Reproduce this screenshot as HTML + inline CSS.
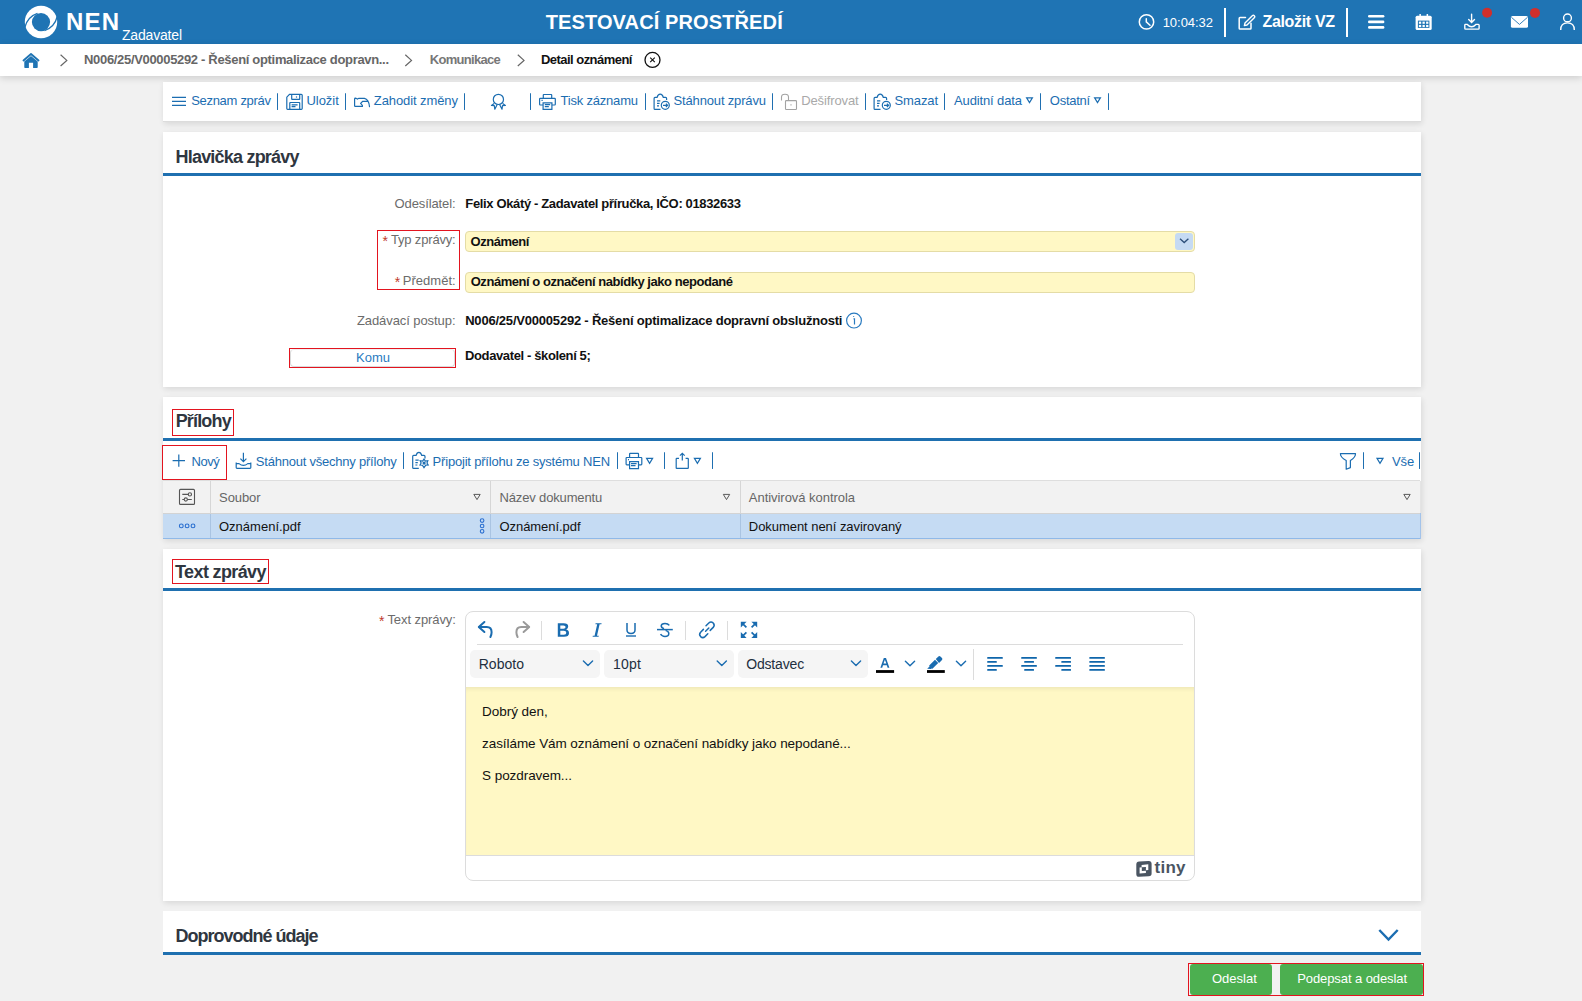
<!DOCTYPE html>
<html lang="cs"><head><meta charset="utf-8"><title>Detail oznámení</title>
<style>
html,body{margin:0;padding:0;}
body{width:1582px;height:1001px;overflow:hidden;position:relative;background:#f1f1f1;font-family:"Liberation Sans", sans-serif;}
.t{position:absolute;white-space:nowrap;line-height:1;}
.a{position:absolute;}
.hdr{left:0;top:0;width:1582px;height:44px;background:#1f74b4;}
.bc{left:0;top:44px;width:1582px;height:32px;background:#fff;box-shadow:0 2px 7px rgba(0,0,0,.15);}
.card{background:#fff;box-shadow:1px 2px 6px rgba(0,0,0,.11);left:163px;width:1258px;}
.bl{height:3px;background:#1f70b0;left:163px;width:1258px;}
.div{width:1px;height:17px;background:#1f6fb1;border-radius:0.5px;}
.rb{border:1px solid #e3141f;box-sizing:border-box;}
.inp{background:#fff8c5;border:1px solid #e4dca6;border-radius:4px;box-sizing:border-box;}
svg{position:absolute;overflow:visible;}

</style></head><body>
<div class="a hdr"></div>
<div class="a bc"></div>
<!-- cards -->
<div class="a card" style="top:82px;height:39px;border-bottom:1px solid #dcdcdc;"></div>
<div class="a card" style="top:132px;height:255px;"></div>
<div class="a bl" style="top:173px;"></div>
<div class="a card" style="top:397px;height:142px;"></div>
<div class="a bl" style="top:438px;"></div>
<div class="a card" style="top:549px;height:352px;"></div>
<div class="a bl" style="top:588px;"></div>
<div class="a card" style="top:911px;height:44px;box-shadow:none;"></div>
<div class="a bl" style="top:952px;"></div>
<!-- toolbar dividers -->
<div class="a div" style="left:277px;top:93px;"></div>
<div class="a div" style="left:345px;top:93px;"></div>
<div class="a div" style="left:464px;top:93px;"></div>
<div class="a div" style="left:530px;top:93px;"></div>
<div class="a div" style="left:645px;top:93px;"></div>
<div class="a div" style="left:772px;top:93px;"></div>
<div class="a div" style="left:865px;top:93px;"></div>
<div class="a div" style="left:944px;top:93px;"></div>
<div class="a div" style="left:1040px;top:93px;"></div>
<div class="a div" style="left:1108px;top:93px;"></div>
<!-- form -->
<div class="a rb" style="left:377px;top:230px;width:83px;height:60px;"></div>
<div class="a inp" style="left:465px;top:231px;width:730px;height:21px;"></div>
<div class="a" style="left:1175px;top:233px;width:18px;height:17px;background:#c5daf3;border-radius:3px;"></div>
<div class="a inp" style="left:465px;top:272px;width:730px;height:21px;"></div>
<div class="a" style="left:290px;top:349px;width:165px;height:18px;border-radius:4px;border:1px solid #dadada;border-top-color:#f0f0f0;box-sizing:border-box;background:#fff;"></div>
<div class="a rb" style="left:289px;top:348px;width:167px;height:20px;"></div>
<!-- prilohy toolbar -->
<div class="a rb" style="left:162px;top:445px;width:65px;height:35px;"></div>
<div class="a div" style="left:403px;top:452px;"></div>
<div class="a div" style="left:617px;top:452px;"></div>
<div class="a div" style="left:664px;top:452px;"></div>
<div class="a div" style="left:712px;top:452px;"></div>
<div class="a div" style="left:1363px;top:452px;"></div>
<div class="a div" style="left:1419px;top:452px;"></div>
<!-- table -->
<div class="a" style="left:163px;top:480px;width:1257px;height:33px;background:#f2f2f2;border-top:1px solid #dedede;box-sizing:border-box;"></div>
<div class="a" style="left:163px;top:513px;width:1257px;height:26px;background:#c5dbf3;border-bottom:1px solid #90b9e8;box-sizing:border-box;"></div>
<div class="a" style="left:163px;top:513px;width:1257px;height:1px;background:#d3d3d3;"></div>
<div class="a" style="left:210px;top:481px;width:1px;height:32px;background:#d6d6d6;"></div>
<div class="a" style="left:490px;top:481px;width:1px;height:32px;background:#d6d6d6;"></div>
<div class="a" style="left:740px;top:481px;width:1px;height:32px;background:#d6d6d6;"></div>
<div class="a" style="left:210px;top:514px;width:1px;height:24px;background:#aac4e2;"></div>
<div class="a" style="left:490px;top:514px;width:1px;height:24px;background:#aac4e2;"></div>
<div class="a" style="left:740px;top:514px;width:1px;height:24px;background:#aac4e2;"></div>
<div class="a" style="left:1420px;top:481px;width:1px;height:32px;background:#e4e4e4;"></div>
<div class="a" style="left:1420px;top:513px;width:1px;height:26px;background:#a3c3ea;"></div>
<div class="a rb" style="left:172px;top:559px;width:97px;height:25px;"></div>
<div class="a rb" style="left:172px;top:409px;width:62px;height:27px;"></div>
<!-- editor -->
<div class="a" style="left:465px;top:611px;width:730px;height:270px;border:1px solid #dcdcdc;border-radius:8px;box-sizing:border-box;background:#fff;overflow:hidden;">
  <div class="a" style="left:11px;top:32px;width:706px;height:1px;background:#dcdcdc;"></div>
  <div class="a" style="left:4px;top:38px;width:130px;height:28px;background:#f5f5f5;border-radius:5px;"></div>
  <div class="a" style="left:138px;top:38px;width:130px;height:28px;background:#f5f5f5;border-radius:5px;"></div>
  <div class="a" style="left:272px;top:38px;width:130px;height:28px;background:#f5f5f5;border-radius:5px;"></div>
  <div class="a" style="left:507px;top:37px;width:1px;height:31px;background:#dcdcdc;"></div>
  <div class="a" style="left:75px;top:9px;width:1px;height:19px;background:#dcdcdc;"></div>
  <div class="a" style="left:219px;top:9px;width:1px;height:19px;background:#dcdcdc;"></div>
  <div class="a" style="left:261px;top:9px;width:1px;height:19px;background:#dcdcdc;"></div>
  <div class="a" style="left:0;top:75px;width:728px;height:168px;background:#fff8c5;border-bottom:1px solid #dcdcdc;box-shadow:inset 0 4px 4px -2px rgba(0,0,0,.07);"></div>
</div>
<!-- buttons -->
<div class="a rb" style="left:1188px;top:963px;width:236px;height:33px;"></div>
<div class="a" style="left:1190px;top:964px;width:82px;height:31px;background:#4caf50;border-radius:3px;"></div>
<div class="a" style="left:1280px;top:964px;width:143px;height:31px;background:#4caf50;border-radius:3px;"></div>
<!-- header icons -->
<svg style="left:0;top:0" width="1582" height="44" viewBox="0 0 1582 44">
  <circle cx="41" cy="22" r="16.2" fill="#fff"/>
  <circle cx="41" cy="22.1" r="9.1" fill="#1f74b4"/>
  <path d="M24.6 27.8 Q27.5 16.5 37.5 13.3" stroke="#1f74b4" stroke-width="1.4" fill="none"/>
  <path d="M57.4 16.2 Q54.5 27.5 44.5 30.7" stroke="#1f74b4" stroke-width="1.4" fill="none"/>
  <!-- clock -->
  <circle cx="1146.5" cy="21.9" r="7.2" stroke="#fff" stroke-width="1.5" fill="none"/>
  <path d="M1146.3 18.8 V21.9 L1150 25.2" stroke="#fff" stroke-width="1.5" fill="none" stroke-linecap="round"/>
  <!-- dividers -->
  <rect x="1224" y="8" width="2" height="29" fill="#fff"/>
  <rect x="1346" y="8" width="2" height="29" fill="#fff"/>
  <!-- edit -->
  <path d="M1245.5 17.6 H1240 Q1239.2 17.6 1239.2 18.4 V28.2 Q1239.2 29 1240 29 H1250.2 Q1251 29 1251 28.2 V23.2" stroke="#fff" stroke-width="1.5" fill="none" stroke-linecap="round"/>
  <path d="M1245 23 L1252.3 15.7 Q1253.3 14.7 1254.3 15.7 Q1255.3 16.7 1254.3 17.7 L1247 25 L1244.4 25.6 Z" stroke="#fff" stroke-width="1.4" fill="none" stroke-linejoin="round"/>
  <!-- hamburger -->
  <rect x="1368" y="15" width="16.4" height="2.6" rx="1.3" fill="#fff"/>
  <rect x="1368" y="20.6" width="16.4" height="2.6" rx="1.3" fill="#fff"/>
  <rect x="1368" y="26.1" width="16.4" height="2.6" rx="1.3" fill="#fff"/>
  <!-- calendar -->
  <rect x="1415.6" y="15.8" width="16.1" height="14.2" rx="1.5" fill="#fff"/>
  <rect x="1417.9" y="20.6" width="11.5" height="7.3" fill="#1f74b4"/>
  <rect x="1418.9" y="21.6" width="2.3" height="2.2" fill="#fff"/><rect x="1422.5" y="21.6" width="2.3" height="2.2" fill="#fff"/><rect x="1426.1" y="21.6" width="2.3" height="2.2" fill="#fff"/>
  <rect x="1418.9" y="24.9" width="2.3" height="2.2" fill="#fff"/><rect x="1422.5" y="24.9" width="2.3" height="2.2" fill="#fff"/><rect x="1426.1" y="24.9" width="2.3" height="2.2" fill="#fff"/>
  <rect x="1419.4" y="14" width="1.5" height="3.4" fill="#fff"/><rect x="1426.6" y="14" width="1.5" height="3.4" fill="#fff"/>
  <!-- download tray -->
  <path d="M1471.6 14.3 V22.4 M1468.7 19.5 L1471.6 22.4 L1474.5 19.5" stroke="#fff" stroke-width="1.4" fill="none" stroke-linecap="round"/>
  <path d="M1465 24.4 H1467.3 Q1471.6 29 1475.9 24.4 H1478.3 Q1479.1 24.4 1479.1 25.2 V28.2 Q1479.1 29.1 1478.3 29.1 H1465.6 Q1464.8 29.1 1464.8 28.2 V25.2 Q1464.8 24.4 1465 24.4 Z" stroke="#fff" stroke-width="1.4" fill="none"/>
  <circle cx="1487.1" cy="12.8" r="5" fill="#d02f2c"/>
  <!-- mail -->
  <rect x="1510.9" y="16" width="17.1" height="11.8" rx="1.6" fill="#fff"/>
  <path d="M1511.4 17.3 L1519.45 24.4 L1527.5 17.3" stroke="#1f74b4" stroke-width="0.9" fill="none"/>
  <circle cx="1535" cy="12.9" r="5" fill="#d02f2c"/>
  <!-- user -->
  <circle cx="1567.5" cy="17.9" r="3.9" stroke="#fff" stroke-width="1.4" fill="none"/>
  <path d="M1560.7 29.9 Q1560.7 22.9 1567.5 22.9 Q1574.3 22.9 1574.3 29.9" stroke="#fff" stroke-width="1.4" fill="none"/>
</svg>
<!-- breadcrumb icons -->
<svg style="left:0;top:44px" width="700" height="32" viewBox="0 44 700 32">
  <path d="M23.5 60.5 L31 54 L38.5 60.5" stroke="#1f74b4" stroke-width="1.9" fill="none" stroke-linecap="round" stroke-linejoin="round"/>
  <path d="M24.3 61.6 L31 56 L37.7 61.6 V67.3 Q37.7 68 37 68 H33.1 V62.8 H28.9 V68 H25 Q24.3 68 24.3 67.3 Z" fill="#1f74b4"/>
  <path d="M60.6 54.8 L66.8 60.4 L60.6 66" stroke="#666" stroke-width="1.2" fill="none"/>
  <path d="M405.3 54.8 L411.5 60.4 L405.3 66" stroke="#666" stroke-width="1.2" fill="none"/>
  <path d="M517.8 54.8 L524 60.4 L517.8 66" stroke="#666" stroke-width="1.2" fill="none"/>
  <circle cx="652.5" cy="59.9" r="7.5" stroke="#111" stroke-width="1.3" fill="none"/>
  <path d="M650.2 57.6 L654.8 62.2 M654.8 57.6 L650.2 62.2" stroke="#111" stroke-width="1.1" fill="none"/>
</svg>
<!-- toolbar icons -->
<svg style="left:0;top:82px" width="1200" height="40" viewBox="0 82 1200 40">
  <g stroke="#1b6db1" fill="none" stroke-width="1.2">
    <path d="M172 97.3 H186 M172 101.3 H186 M172 105.3 H186"/>
    <!-- save -->
    <path d="M289.5 94.3 H301.3 Q302.2 94.3 302.2 95.2 V108.6 Q302.2 109.4 301.3 109.4 H287.6 Q286.8 109.4 286.8 108.6 V97.2 Z"/>
    <path d="M291.7 94.3 V99 Q291.7 99.4 292.1 99.4 H299.3 Q299.7 99.4 299.7 99 V94.3"/>
    <path d="M289.8 109.4 V103 Q289.8 102.5 290.3 102.5 H299.2 Q299.7 102.5 299.7 103 V109.4"/>
    <path d="M291.6 104.8 H297.6 M291.6 106.7 H295.5"/>
    <path d="M296.5 96.4 V97.6"/>
    <!-- zahodit -->
    <path d="M369.5 106.6 Q368.8 99.4 364.4 98.4 H358.6 Q357.4 99.6 356.2 98.4 L355.4 98.2 Q354.6 98.2 354.6 99 V105.8 Q354.6 106.4 355.2 106.4 H362.4 V105.4 L360.6 103.4 L362.8 101.3 H367.2" stroke-linejoin="round" stroke-linecap="round"/>
    <!-- award -->
    <circle cx="498.4" cy="99.4" r="5.1"/>
    <path d="M494.2 103.4 L491.4 105.4 L494.3 105.6 L494.8 109.2 L497.2 104.5" stroke-linejoin="round"/>
    <path d="M502.6 103.4 L505.4 105.4 L502.5 105.6 L502 109.2 L499.6 104.5" stroke-linejoin="round"/>
    <!-- printer -->
    <path d="M543.3 98.2 V95 Q543.3 94.5 543.8 94.5 H551.2 Q551.7 94.5 551.7 95 V98.2"/>
    <path d="M543 105 H540.3 Q539.6 105 539.6 104.3 V99 Q539.6 98.4 540.3 98.4 H554.6 Q555.3 98.4 555.3 99 V104.3 Q555.3 105 554.6 105 H552"/>
    <path d="M543.1 109.4 V102.8 H551.9 V109.4 Z"/>
    <path d="M544.8 104.6 H550.2 M544.8 106.6 H548.8 M541.5 100.4 H542.7"/>
    <!-- clipboard arrow -->
    <path d="M666.6 100 V98.4 Q666.6 97.4 665.6 97.4 H663.3 Q662.5 94.2 660.2 94.2 Q657.9 94.2 657.1 97.4 H655 Q654.1 97.4 654.1 98.4 V108.4 Q654.1 109.3 655 109.3 H660.5"/>
    <path d="M657 100.9 H660.3 M657 103.4 H659.6 M657 105.9 H659"/>
    <circle cx="665.3" cy="105.3" r="4"/>
    <path d="M663 105.3 H667.6 M665.9 103.6 L667.6 105.3 L665.9 107"/>
    <path d="M887.6 100 V98.4 Q887.6 97.4 886.6 97.4 H884.3 Q883.5 94.2 881.2 94.2 Q878.9 94.2 878.1 97.4 H876 Q875.1 97.4 875.1 98.4 V108.4 Q875.1 109.3 876 109.3 H881.5" transform="translate(-1 0)"/>
    <path d="M877 100.9 H880.3 M877 103.4 H879.6 M877 105.9 H879"/>
    <circle cx="886.3" cy="105.3" r="4"/>
    <path d="M884 105.3 H888.6 M886.9 103.6 L888.6 105.3 L886.9 107"/>
    <!-- triangles -->
    <path d="M1026.6 97.8 H1032.4 L1029.5 102.6 Z"/>
    <path d="M1094.6 97.8 H1100.4 L1097.5 102.6 Z"/>
  </g>
  <g stroke="#a3a3a3" fill="none" stroke-width="1.1">
    <path d="M781.5 100.6 V97.2 Q781.5 94.3 785 94.3 Q788.5 94.3 788.5 97.2 V100.4"/>
    <rect x="785.5" y="100.6" width="11" height="8.9" rx="0.8"/>
    <path d="M791 104.2 V105.4"/>
  </g>
</svg>
<!-- info icon -->
<svg style="left:840px;top:306px" width="30" height="30" viewBox="840 306 30 30">
  <circle cx="854" cy="320.6" r="7.4" stroke="#2a7bc0" stroke-width="1.2" fill="none"/>
  <path d="M853.5 318.8 H854.5 V324.5 M853.6 316.3 V317" stroke="#2a7bc0" stroke-width="1.2" fill="none"/>
</svg>
<!-- select chevron -->
<svg style="left:1170px;top:230px" width="30" height="22" viewBox="1170 230 30 22">
  <path d="M1180 238.8 L1184.2 242.6 L1188.4 238.8" stroke="#2d4f7a" stroke-width="1.3" fill="none"/>
</svg>
<!-- prilohy toolbar icons -->
<svg style="left:160px;top:442px" width="1270" height="100" viewBox="160 442 1270 100">
  <g stroke="#1b6db1" fill="none" stroke-width="1.2">
    <path d="M178.8 454.6 V466.7 M172.6 460.6 H185"/>
    <!-- download tray -->
    <path d="M243.4 452.8 V461.6 M240.4 458.6 L243.4 461.6 L246.4 458.6"/>
    <path d="M236.2 462.4 V467.6 Q236.2 468.4 237 468.4 H250 Q250.8 468.4 250.8 467.6 V462.4 M236.4 463.6 H239 Q243.4 467 247.8 463.6 H250.6"/>
    <!-- clipboard gear -->
    <path d="M425 458.4 V456.4 Q425 455.4 424 455.4 H421.7 Q420.9 452.4 418.9 452.4 Q416.9 452.4 416.1 455.4 H413.6 Q412.7 455.4 412.7 456.4 V467.4 Q412.7 468.4 413.6 468.4 H418.8"/>
    <path d="M415.4 460.1 H418.7 M415.4 462.6 H417.8 M415.4 465 H417.4"/>
    <path d="M424 459.1 L425.4 461 L427.8 460.7 L427 463 L428.2 465 L425.8 465.2 L424 467.6 L422.4 465.2 L420 465 L421.1 463 L420.2 460.7 L422.6 461 Z"/>
    <circle cx="424.1" cy="463.1" r="1" fill="#1b6db1"/>
    <!-- printer -->
    <path d="M629.6 457.3 V453.9 Q629.6 453.4 630.1 453.4 H638 Q638.5 453.4 638.5 453.9 V457.3"/>
    <path d="M629.4 464.8 H626.8 Q626.1 464.8 626.1 464.1 V458.2 Q626.1 457.5 626.8 457.5 H641.1 Q641.8 457.5 641.8 458.2 V464.1 Q641.8 464.8 641.1 464.8 H638.6"/>
    <path d="M629.6 468.6 V461.7 H638.5 V468.6 Z"/>
    <path d="M631 463.6 H636.6 M631 465.7 H635.5 M628 459.6 H629"/>
    <path d="M646.6 458.4 H652.6 L649.6 463.4 Z"/>
    <!-- share -->
    <path d="M679 458.4 H676.7 Q676.2 458.4 676.2 458.9 V467.9 Q676.2 468.4 676.7 468.4 H687.8 Q688.3 468.4 688.3 467.9 V458.9 Q688.3 458.4 687.8 458.4 H685.6"/>
    <path d="M682.3 460.6 V453.4 M679.9 455.7 L682.3 453.3 L684.7 455.7"/>
    <path d="M694.4 458.4 H700.4 L697.4 463.4 Z"/>
    <!-- filter -->
    <path d="M1340.4 453.6 H1355.5 Q1355.7 457.2 1350.4 460.6 V467.6 L1346.2 469.2 V460.6 Q1340.2 457.2 1340.4 453.6 Z" stroke-linejoin="round"/>
    <path d="M1377 458.4 H1383 L1380 463.4 Z"/>
  </g>
  <!-- table icons -->
  <g stroke="#555" fill="none" stroke-width="1.1">
    <rect x="179.5" y="489.4" width="15" height="15" rx="1"/>
    <path d="M182.3 494.4 H191.8 M182.3 499.5 H191.8"/>
    <circle cx="189.9" cy="494.4" r="1.6" fill="#f2f2f2"/>
    <circle cx="185.8" cy="499.5" r="1.6" fill="#f2f2f2"/>
    <path d="M473.8 494.4 H480.2 L477 499.6 Z" stroke="#5a5a5a" stroke-width="1"/>
    <path d="M723.3 494.4 H729.7 L726.5 499.6 Z" stroke="#5a5a5a" stroke-width="1"/>
    <path d="M1403.8 494.4 H1410.2 L1407 499.6 Z" stroke="#5a5a5a" stroke-width="1"/>
  </g>
  <g stroke="#2a6fd0" fill="none" stroke-width="1.1">
    <circle cx="181.3" cy="525.9" r="1.9"/><circle cx="187.1" cy="525.9" r="1.9"/><circle cx="193" cy="525.9" r="1.9"/>
    <circle cx="482.1" cy="520.6" r="1.8"/><circle cx="482.1" cy="526" r="1.8"/><circle cx="482.1" cy="531.3" r="1.8"/>
  </g>
</svg>
<!-- editor icons -->
<svg style="left:465px;top:611px" width="730" height="270" viewBox="465 611 730 270">
  <g stroke="#1a6cb0" fill="none" stroke-width="2" stroke-linecap="round" stroke-linejoin="round">
    <path d="M484.4 622 L478.8 626.9 L484.4 632"/>
    <path d="M479.2 626.9 H486.8 Q491.6 626.9 491.6 632.2 Q491.6 634.6 490.4 637"/>
  </g>
  <g stroke="#9a9a9a" fill="none" stroke-width="2" stroke-linecap="round" stroke-linejoin="round">
    <path d="M523.6 622 L529.2 626.9 L523.6 632"/>
    <path d="M528.8 626.9 H521.2 Q516.4 626.9 516.4 632.2 Q516.4 634.6 517.6 637"/>
  </g>
  <g fill="#1a6cb0">
    <path d="M557.8 623.3 H563.6 Q568.2 623.3 568.2 626.6 Q568.2 628.8 566.2 629.6 Q569 630.4 569 633.2 Q569 636.8 564 636.8 H557.8 Z M560.3 625.4 V628.8 H563.4 Q565.6 628.8 565.6 627.1 Q565.6 625.4 563.4 625.4 Z M560.3 630.8 V634.7 H563.8 Q566.3 634.7 566.3 632.75 Q566.3 630.8 563.8 630.8 Z" fill-rule="evenodd"/>
    <path d="M595.6 623.2 H601.6 L601.4 624.2 H599.6 L597 635.8 H598.8 L598.6 636.8 H592.6 L592.8 635.8 H594.6 L597.2 624.2 H595.4 Z"/>
  </g>
  <g stroke="#1a6cb0" fill="none" stroke-width="1.5">
    <path d="M627 623 V630 Q627 633.4 631 633.4 Q635 633.4 635 630 V623"/>
    <path d="M626 636 H636" stroke-width="1.4"/>
    <path d="M657 629.6 H672.8"/>
    <path d="M669.3 625.4 Q668 623.4 665 623.4 Q661.4 623.4 661.2 625.8 Q661.2 627.8 664 628.8 M665.6 630.4 Q668.8 631.4 668.8 633.4 Q668.8 636.4 665 636.4 Q661.8 636.4 660.6 634"/>
    <path d="M705.6 631.2 L708.8 628 M703.4 629.4 L700.6 632.2 Q698.6 634.4 700.6 636.6 Q702.8 638.6 705 636.6 L707.8 633.8 M710.2 630.4 L713.2 627.4 Q715.2 625.2 713.2 623 Q711 621 708.8 623 L706 625.8" stroke-linecap="round"/>
  </g>
  <g fill="#1a6cb0">
    <path d="M740.8 621.8 H746.6 L740.8 627.6 Z"/>
    <path d="M757.2 621.8 H751.4 L757.2 627.6 Z"/>
    <path d="M740.8 637.9 H746.6 L740.8 632.1 Z"/>
    <path d="M757.2 637.9 H751.4 L757.2 632.1 Z"/>
    <path d="M742.6 623.6 L746.4 627.4 M755.4 623.6 L751.6 627.4 M742.6 636.1 L746.4 632.3 M755.4 636.1 L751.6 632.3" stroke="#1a6cb0" stroke-width="1.7"/>
  </g>
  <g stroke="#1a6cb0" fill="none" stroke-width="1.4" stroke-linecap="round" stroke-linejoin="round">
    <path d="M583.4 661 L588 665.4 L592.6 661"/>
    <path d="M717.2 661 L721.8 665.4 L726.4 661"/>
    <path d="M851.4 661 L856 665.4 L860.6 661"/>
    <path d="M905.4 661.2 L910 665.8 L914.6 661.2"/>
    <path d="M956.4 661.2 L961 665.8 L965.6 661.2"/>
  </g>
  <path d="M880.4 667.8 L883.8 658.1 H886 L889.4 667.8 H887.6 L886.8 665.2 H883 L882.2 667.8 Z M883.5 663.6 H886.3 L884.9 659.8 Z" fill="#1a6cb0" fill-rule="evenodd"/>
  <rect x="876" y="670.1" width="18.1" height="2.8" fill="#000"/>
  <path d="M927.2 668.7 L929.5 666.4 L929.2 665.6 L935 659.8 L938.2 663 L932.4 668.8 L931.6 668.6 L930.9 668.9 Z M935.8 659 L938.4 656.4 Q939.4 655.6 940.4 656.4 L942 658 Q942.8 659 942 660 L939 663 Z" fill="#1a6cb0"/>
  <rect x="927" y="670.1" width="17.8" height="2.8" fill="#000"/>
  <g fill="#0f66ab">
    <rect x="987.2" y="657.1" width="15.6" height="1.7" rx="0.5"/><rect x="987.2" y="661.1" width="9.6" height="1.7" rx="0.5"/><rect x="987.2" y="665.1" width="15.6" height="1.7" rx="0.5"/><rect x="987.2" y="669.1" width="9.6" height="1.7" rx="0.5"/>
    <rect x="1021.2" y="657.1" width="15.7" height="1.7" rx="0.5"/><rect x="1024.2" y="661.1" width="9.8" height="1.7" rx="0.5"/><rect x="1021.2" y="665.1" width="15.7" height="1.7" rx="0.5"/><rect x="1024.2" y="669.1" width="9.8" height="1.7" rx="0.5"/>
    <rect x="1055.2" y="657.1" width="15.8" height="1.7" rx="0.5"/><rect x="1061.3" y="661.1" width="9.7" height="1.7" rx="0.5"/><rect x="1055.2" y="665.1" width="15.8" height="1.7" rx="0.5"/><rect x="1061.3" y="669.1" width="9.7" height="1.7" rx="0.5"/>
    <rect x="1089.3" y="657.1" width="15.6" height="1.7" rx="0.5"/><rect x="1089.3" y="661.1" width="15.6" height="1.7" rx="0.5"/><rect x="1089.3" y="665.1" width="15.6" height="1.7" rx="0.5"/><rect x="1089.3" y="669.1" width="15.6" height="1.7" rx="0.5"/>
  </g>
  <!-- tiny logo -->
  <path d="M1139.2 861.4 L1148.6 860.9 Q1151.6 860.8 1151.6 863.8 V873.4 Q1151.6 876.1 1148.8 876.2 L1139.2 876.8 Q1136.3 876.9 1136.3 873.9 V864.4 Q1136.3 861.6 1139.2 861.4 Z" fill="#4a5562"/>
  <path d="M1141.6 865 L1148.3 864.3 V870 L1145.9 870.2 V866.9 L1141.6 867.3 Z" fill="#fff"/>
  <path d="M1139.6 867.5 L1141.8 867.3 V871.1 L1145.9 870.8 V872.9 L1139.6 873.5 Z" fill="#fff"/>
</svg>
<!-- doprovodne chevron -->
<svg style="left:1370px;top:920px" width="40" height="30" viewBox="1370 920 40 30">
  <path d="M1379.3 930 L1388.5 939.6 L1397.7 930" stroke="#1b6db1" stroke-width="2.4" fill="none"/>
</svg>

<div class="t" id="t0" style="left:66.0px;top:9.68px;font-size:24px;font-weight:700;color:#fff;letter-spacing:1.162px;">NEN</div>
<div class="t" id="t1" style="left:122.0px;top:27.95px;font-size:14px;font-weight:400;color:#fff;letter-spacing:-0.186px;">Zadavatel</div>
<div class="t" id="t2" style="left:545.7px;top:11.97px;font-size:20px;font-weight:700;color:#fff;letter-spacing:0.120px;">TESTOVACÍ PROSTŘEDÍ</div>
<div class="t" id="t3" style="left:1162.7px;top:15.90px;font-size:13px;font-weight:400;color:#fff;letter-spacing:-0.044px;">10:04:32</div>
<div class="t" id="t4" style="left:1262.5px;top:13.66px;font-size:16px;font-weight:700;color:#fff;letter-spacing:-0.340px;">Založit VZ</div>
<div class="t" id="t5" style="left:84.0px;top:53.40px;font-size:13px;font-weight:700;color:#666;letter-spacing:-0.323px;">N006/25/V00005292 - Řešení optimalizace dopravn...</div>
<div class="t" id="t6" style="left:429.8px;top:53.40px;font-size:13px;font-weight:700;color:#777;letter-spacing:-0.701px;">Komunikace</div>
<div class="t" id="t7" style="left:541.0px;top:53.40px;font-size:13px;font-weight:700;color:#111;letter-spacing:-0.541px;">Detail oznámení</div>
<div class="t" id="t8" style="left:191.2px;top:94.30px;font-size:13px;font-weight:400;color:#1b6db1;letter-spacing:-0.300px;">Seznam zpráv</div>
<div class="t" id="t9" style="left:306.5px;top:94.30px;font-size:13px;font-weight:400;color:#1b6db1;letter-spacing:-0.044px;">Uložit</div>
<div class="t" id="t10" style="left:373.8px;top:94.30px;font-size:13px;font-weight:400;color:#1b6db1;letter-spacing:-0.089px;">Zahodit změny</div>
<div class="t" id="t11" style="left:560.5px;top:94.30px;font-size:13px;font-weight:400;color:#1b6db1;letter-spacing:-0.202px;">Tisk záznamu</div>
<div class="t" id="t12" style="left:673.6px;top:94.30px;font-size:13px;font-weight:400;color:#1b6db1;letter-spacing:-0.163px;">Stáhnout zprávu</div>
<div class="t" id="t13" style="left:801.2px;top:94.30px;font-size:13px;font-weight:400;color:#a9a9a9;letter-spacing:-0.115px;">Dešifrovat</div>
<div class="t" id="t14" style="left:894.5px;top:94.30px;font-size:13px;font-weight:400;color:#1b6db1;letter-spacing:-0.115px;">Smazat</div>
<div class="t" id="t15" style="left:954.0px;top:94.30px;font-size:13px;font-weight:400;color:#1b6db1;letter-spacing:-0.126px;">Auditní data</div>
<div class="t" id="t16" style="left:1049.8px;top:94.30px;font-size:13px;font-weight:400;color:#1b6db1;letter-spacing:-0.252px;">Ostatní</div>
<div class="t" id="t17" style="left:175.5px;top:147.66px;font-size:18px;font-weight:700;color:#2f3640;letter-spacing:-0.793px;">Hlavička zprávy</div>
<div class="t" id="t18" style="left:175.7px;top:412.46px;font-size:18px;font-weight:700;color:#2f3640;letter-spacing:-0.836px;">Přílohy</div>
<div class="t" id="t19" style="left:175.1px;top:562.56px;font-size:18px;font-weight:700;color:#2f3640;letter-spacing:-0.632px;">Text zprávy</div>
<div class="t" id="t20" style="left:175.6px;top:926.76px;font-size:18px;font-weight:700;color:#2f3640;letter-spacing:-1.001px;">Doprovodné údaje</div>
<div class="t" id="t21" style="left:394.6px;top:197.00px;font-size:13px;font-weight:400;color:#6b6b6b;letter-spacing:-0.116px;">Odesílatel:</div>
<div class="t" id="t22" style="left:391.0px;top:233.00px;font-size:13px;font-weight:400;color:#6b6b6b;letter-spacing:-0.177px;">Typ zprávy:</div>
<div class="t" id="t23" style="left:402.7px;top:273.90px;font-size:13px;font-weight:400;color:#6b6b6b;letter-spacing:0.036px;">Předmět:</div>
<div class="t" id="t24" style="left:356.9px;top:313.70px;font-size:13px;font-weight:400;color:#6b6b6b;letter-spacing:-0.075px;">Zadávací postup:</div>
<div class="t" id="t25" style="left:387.4px;top:613.00px;font-size:13px;font-weight:400;color:#6b6b6b;letter-spacing:-0.078px;">Text zprávy:</div>
<div class="t" id="t26" style="left:382.6px;top:234.15px;font-size:14px;font-weight:400;color:#c0392b;">*</div>
<div class="t" id="t27" style="left:394.8px;top:275.05px;font-size:14px;font-weight:400;color:#c0392b;">*</div>
<div class="t" id="t28" style="left:379.1px;top:614.15px;font-size:14px;font-weight:400;color:#c0392b;">*</div>
<div class="t" id="t29" style="left:465.3px;top:197.00px;font-size:13px;font-weight:700;color:#111;letter-spacing:-0.353px;">Felix Okátý - Zadavatel příručka, IČO: 01832633</div>
<div class="t" id="t30" style="left:470.6px;top:234.80px;font-size:13px;font-weight:700;color:#111;letter-spacing:-0.491px;">Oznámení</div>
<div class="t" id="t31" style="left:470.7px;top:275.20px;font-size:13px;font-weight:700;color:#111;letter-spacing:-0.450px;">Oznámení o označení nabídky jako nepodané</div>
<div class="t" id="t32" style="left:465.2px;top:313.70px;font-size:13px;font-weight:700;color:#111;letter-spacing:-0.206px;">N006/25/V00005292 - Řešení optimalizace dopravní obslužnosti</div>
<div class="t" id="t33" style="left:465.0px;top:349.30px;font-size:13px;font-weight:700;color:#111;letter-spacing:-0.374px;">Dodavatel - školení 5;</div>
<div class="t" id="t34" style="left:356.0px;top:351.00px;font-size:13px;font-weight:400;color:#2a7bbf;letter-spacing:0.012px;">Komu</div>
<div class="t" id="t35" style="left:191.6px;top:455.30px;font-size:13px;font-weight:400;color:#1b6db1;letter-spacing:-0.510px;">Nový</div>
<div class="t" id="t36" style="left:255.8px;top:455.30px;font-size:13px;font-weight:400;color:#1b6db1;letter-spacing:-0.221px;">Stáhnout všechny přílohy</div>
<div class="t" id="t37" style="left:432.6px;top:455.30px;font-size:13px;font-weight:400;color:#1b6db1;letter-spacing:-0.200px;">Připojit přílohu ze systému NEN</div>
<div class="t" id="t38" style="left:1392.0px;top:455.30px;font-size:13px;font-weight:400;color:#1b6db1;letter-spacing:-0.106px;">Vše</div>
<div class="t" id="t39" style="left:219.1px;top:491.30px;font-size:13px;font-weight:400;color:#666;letter-spacing:-0.104px;">Soubor</div>
<div class="t" id="t40" style="left:499.5px;top:491.30px;font-size:13px;font-weight:400;color:#666;letter-spacing:-0.149px;">Název dokumentu</div>
<div class="t" id="t41" style="left:748.8px;top:491.30px;font-size:13px;font-weight:400;color:#666;letter-spacing:-0.036px;">Antivirová kontrola</div>
<div class="t" id="t42" style="left:219.0px;top:520.10px;font-size:13px;font-weight:400;color:#111;letter-spacing:0.003px;">Oznámení.pdf</div>
<div class="t" id="t43" style="left:499.5px;top:520.10px;font-size:13px;font-weight:400;color:#111;letter-spacing:-0.060px;">Oznámení.pdf</div>
<div class="t" id="t44" style="left:748.8px;top:520.10px;font-size:13px;font-weight:400;color:#111;letter-spacing:-0.049px;">Dokument není zavirovaný</div>
<div class="t" id="t45" style="left:478.7px;top:656.85px;font-size:14px;font-weight:400;color:#222f3e;letter-spacing:0.029px;">Roboto</div>
<div class="t" id="t46" style="left:613.0px;top:656.85px;font-size:14px;font-weight:400;color:#222f3e;letter-spacing:0.250px;">10pt</div>
<div class="t" id="t47" style="left:746.2px;top:656.85px;font-size:14px;font-weight:400;color:#222f3e;letter-spacing:-0.163px;">Odstavec</div>
<div class="t" id="t48" style="left:482.1px;top:704.97px;font-size:13.5px;font-weight:400;color:#111;letter-spacing:-0.050px;">Dobrý den,</div>
<div class="t" id="t49" style="left:482.1px;top:736.87px;font-size:13.5px;font-weight:400;color:#111;letter-spacing:-0.078px;">zasíláme Vám oznámení o označení nabídky jako nepodané...</div>
<div class="t" id="t50" style="left:482.1px;top:768.97px;font-size:13.5px;font-weight:400;color:#111;letter-spacing:-0.069px;">S pozdravem...</div>
<div class="t" id="t51" style="left:1154.5px;top:859.21px;font-size:17px;font-weight:700;color:#4a5562;letter-spacing:0.256px;">tiny</div>
<div class="t" id="t52" style="left:1211.9px;top:972.40px;font-size:13px;font-weight:400;color:#fff;letter-spacing:0.031px;">Odeslat</div>
<div class="t" id="t53" style="left:1297.2px;top:972.40px;font-size:13px;font-weight:400;color:#fff;letter-spacing:-0.083px;">Podepsat a odeslat</div>
</body></html>
